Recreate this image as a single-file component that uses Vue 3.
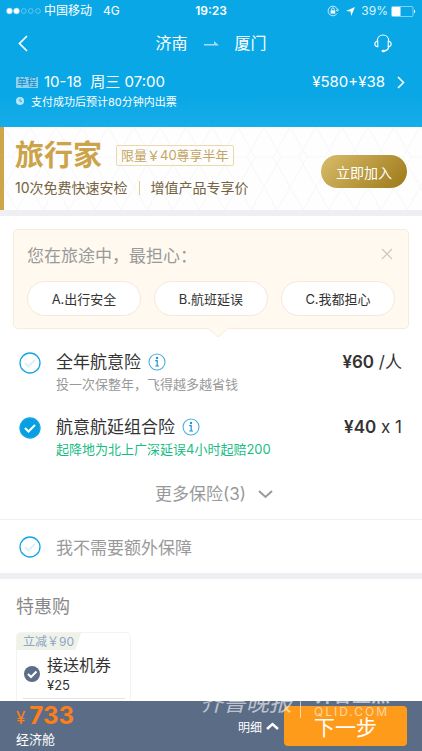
<script setup>
import { ref } from 'vue'

const worries = ['A.出行安全', 'B.航班延误', 'C.我都担心']
const plan = ref('combo')
const coupon = ref(true)
const plans = [
  { id: 'year', name: '全年航意险', note: '投一次保整年，飞得越多越省钱', price: '¥60', unit: '/人', good: false },
  { id: 'combo', name: '航意航延组合险', note: '起降地为北上广深延误4小时起赔200', price: '¥40', unit: 'x 1', good: true },
]
</script>

<template>
  <div class="page">
    <header class="header">
      <div class="status">
        <div class="carrier">
          <svg class="signal" width="36" height="8" viewBox="0 0 36 8">
            <circle cx="3.5" cy="4" r="2.9" fill="#fff" />
            <circle cx="10.5" cy="4" r="2.9" fill="#fff" />
            <circle cx="17.8" cy="4" r="2.4" />
            <circle cx="24.8" cy="4" r="2.4" />
            <circle cx="32" cy="4" r="2.4" />
          </svg>
          <span>中国移动</span>
          <span class="net">4G</span>
        </div>
        <strong class="clock">19:23</strong>
        <div class="power">
          <svg width="12" height="12" viewBox="0 0 12 12" fill="none" stroke="#d9f2fd">
            <path d="M10.6 5A4.8 4.8 0 1 0 10 8.5M9 5.2l1.7 1 1-1.8" stroke-width="0.9" />
            <path d="M3.6 5.4h4.6v3.2H3.6z" fill="#fff" stroke="none" />
            <path d="M4.6 5.5V4.2a1.3 1.3 0 0 1 2.6 0v1.3" stroke-width="0.9" />
          </svg>
          <svg class="locate" width="9" height="9" viewBox="0 0 9 9"><path d="M9 0 5.2 9 4.6 4.5 0 4z" fill="#fff" /></svg>
          <span>39%</span>
          <svg class="battery" width="25" height="11" viewBox="0 0 25 11">
            <rect x="0.5" y="0.5" width="21.5" height="10" rx="1" fill="none" stroke="#7fd2f6" />
            <rect x="1" y="1" width="8.5" height="9" fill="#fff" />
            <path d="M23 3.8c1.6 0 1.6 3.4 0 3.4z" fill="#fff" />
          </svg>
        </div>
      </div>

      <nav class="nav">
        <button class="icon-button" aria-label="返回">
          <svg width="10" height="17" viewBox="0 0 10 17"><path d="M9 1 1.5 8.5 9 16" fill="none" stroke="#fff" stroke-width="1.7" /></svg>
        </button>
        <h1 class="route">
          <span>济南</span>
          <svg width="15" height="5" viewBox="0 0 15 5"><path d="M0 3h10V0l5 4.6H0z" fill="#a5dcf6" /></svg>
          <span>厦门</span>
        </h1>
        <button class="icon-button service" aria-label="客服">
          <svg width="18" height="19" viewBox="0 0 18 19" fill="none" stroke="#fff" stroke-width="1.1">
            <path d="M3.2 7.5C3.2 3.6 5.6 1 9 1s5.8 2.6 5.8 6.5M3.8 7.200v5.600C1.800 12.600.8 11.500.8 10s1-2.600 3-2.800zM14.200 7.200v5.600c2-.2 3-1.300 3-2.800s-1-2.600-3-2.800zM14.800 12.800c-.4 2.300-1.800 3.600-4 4" />
            <ellipse cx="9.5" cy="17" rx="2" ry="1.2" fill="#fff" stroke="none" />
          </svg>
        </button>
      </nav>

      <section class="trip">
        <div class="trip-main">
          <span class="tag">单程</span>
          <span class="date">10-18&nbsp; 周三 07:00</span>
          <a class="fare" href="#fare">
            ¥580+¥38
            <svg width="8" height="13" viewBox="0 0 8 13"><path d="m1 1 5.500 5.500L1 12" fill="none" stroke="#fff" stroke-width="1.6" /></svg>
          </a>
        </div>
        <p class="trip-note">
          <svg width="8" height="8" viewBox="0 0 8 8"><circle cx="4" cy="4" r="4" fill="#b9e4f8" /><path d="M4 1.800v2.500h2" fill="none" stroke="#1aa8e4" /></svg>
          支付成功后预计80分钟内出票
        </p>
      </section>
    </header>

    <main class="content">
      <section class="member">
        <svg class="lattice" width="100%" height="100%" aria-hidden="true">
          <defs>
            <pattern id="hex" width="52" height="60" patternUnits="userSpaceOnUse">
              <path d="M0 0 17 30 0 60M52 0 35 30l17 30M17 30h18M26 0 9 30l17 30M26 0l17 30-17 30M0 30h9M43 30h9" fill="none" stroke="#f8f8f8" stroke-width="1.2" />
            </pattern>
          </defs>
          <rect width="100%" height="100%" fill="url(#hex)" />
        </svg>
        <div class="member-text">
          <div class="member-top">
            <strong class="brand">旅行家</strong>
            <span class="offer">限量￥40尊享半年</span>
          </div>
          <p class="perks"><span>10次免费快速安检</span><i></i><span>增值产品专享价</span></p>
        </div>
        <button class="join">立即加入</button>
      </section>

      <section class="insurance">
        <div class="survey">
          <div class="survey-head">
            <h2>您在旅途中，最担心：</h2>
            <button class="icon-button" aria-label="关闭">
              <svg width="12" height="12" viewBox="0 0 12 12"><path d="m1 1 10 10M11 1 1 11" stroke="#cac7c1" stroke-width="1.2" /></svg>
            </button>
          </div>
          <div class="choices">
            <button v-for="w in worries" :key="w">{{ w }}</button>
          </div>
          <svg class="pointer" width="20" height="10" viewBox="0 0 20 10"><path d="M0 0h20L10 9z" fill="#fff9f0" /><path d="m0 .5 10 8.500L20 .5" fill="none" stroke="#f7ecdb" /></svg>
        </div>

        <label v-for="p in plans" :key="p.id" class="plan">
          <input v-model="plan" type="radio" name="plan" :value="p.id" />
          <svg class="tick" width="22" height="22" viewBox="0 0 22 22">
            <circle cx="11" cy="11" r="10" /><path d="m6 11 3.500 3.500L16 8" />
          </svg>
          <span class="plan-body">
            <span class="plan-name">{{ p.name }}
              <svg width="18" height="18" viewBox="0 0 18 18">
                <circle cx="9" cy="9" r="8" fill="none" stroke="#49ade0" stroke-width="1.1" />
                <circle cx="9" cy="5" r="1.2" fill="#1c94d3" />
                <path d="M7.200 7.600h2v5.200M7.200 13h3.800" fill="none" stroke="#1c94d3" stroke-width="1.200" />
              </svg>
            </span>
            <span class="plan-note" :class="{ good: p.good }">{{ p.note }}</span>
          </span>
          <span class="plan-price"><b>{{ p.price }}</b> {{ p.unit }}</span>
        </label>

        <button class="more">
          更多保险(3)
          <svg width="15" height="9" viewBox="0 0 15 9"><path d="m1 1 6.500 6L14 1" fill="none" stroke="#999" stroke-width="2" /></svg>
        </button>

        <label class="plan none">
          <input v-model="plan" type="radio" name="plan" value="none" />
          <svg class="tick" width="22" height="22" viewBox="0 0 22 22">
            <circle cx="11" cy="11" r="10" /><path d="m6 11 3.500 3.500L16 8" />
          </svg>
          <span>我不需要额外保障</span>
        </label>
      </section>

      <section class="deals">
        <h2>特惠购</h2>
        <label class="coupon">
          <span class="discount">立减￥90</span>
          <span class="coupon-row">
            <input v-model="coupon" type="checkbox" />
            <svg class="coupon-tick" width="16" height="16" viewBox="0 0 16 16">
              <circle cx="8" cy="8" r="8" /><path d="m4 8 3 3 5.500-5.500" fill="none" stroke="#fff" stroke-width="2" />
            </svg>
            <span class="coupon-text"><span>接送机券</span><small>¥25</small></span>
          </span>
          <span class="rule"></span>
        </label>
      </section>
    </main>

    <footer class="footer">
      <div class="total">
        <div class="sum"><span>¥</span><b>733</b></div>
        <div class="cabin">经济舱</div>
      </div>
      <button class="detail">
        明细
        <svg width="13" height="8" viewBox="0 0 13 8"><path d="m1 7 5.500-5L12 7" fill="none" stroke="#fff" stroke-width="2.4" /></svg>
      </button>
      <button class="next">下一步</button>
      <div class="watermark">
        <em>齐鲁晚报</em>
        <div class="mark-site"><b>齐鲁壹点</b><span>QLID.COM</span></div>
      </div>
    </footer>
  </div>
</template>

<style>
body {
  margin: 0;
}
</style>

<style scoped>
* {
  box-sizing: border-box;
}
.page {
  display: flex;
  flex-direction: column;
  height: 100vh;
  overflow: hidden;
  background: #fff;
  color: #333;
  font-family: Inter, "Noto Sans CJK SC", sans-serif;
}
h1,
h2,
p {
  margin: 0;
  font-weight: 400;
}
button {
  border: 0;
  padding: 0;
  background: none;
  color: inherit;
  font: inherit;
}
svg {
  display: block;
  flex: none;
}
a {
  color: inherit;
  text-decoration: none;
}
input {
  position: absolute;
  opacity: 0;
  margin: 0;
}
.icon-button {
  display: flex;
}

.header {
  flex: none;
  height: 127px;
  background: linear-gradient(#0aa7e6 75%, #16ade8);
  color: #fff;
}
.status {
  display: grid;
  grid-template-columns: 1fr auto 1fr;
  align-items: center;
  height: 22px;
  padding: 0 6px;
  font-size: 12px;
  line-height: 16px;
}
.carrier,
.power {
  display: flex;
  align-items: center;
}
.signal {
  margin-right: 2px;
  stroke: #8fd8f7;
  stroke-width: 0.6;
  fill: none;
}
.net {
  margin-left: 11px;
}
.clock {
  font-weight: 600;
}
.power {
  justify-content: flex-end;
  color: #dff4fd;
}
.locate {
  margin: 0 6px 0 7px;
}
.battery {
  margin-left: 3px;
}
.nav {
  display: grid;
  grid-template-columns: 1fr auto 1fr;
  align-items: center;
  height: 42px;
  padding: 0 18px;
}
.service {
  justify-self: end;
  margin-right: 12px;
}
.route {
  display: flex;
  align-items: center;
  gap: 16px;
  font-size: 16px;
  line-height: 24px;
}
.trip {
  padding: 7px 17px 0 16px;
}
.trip-main {
  display: flex;
  align-items: center;
  height: 22px;
  font-size: 15px;
  line-height: 20px;
}
.tag {
  padding: 0 1px;
  margin-right: 6px;
  background: #8cd3f3;
  color: #0b86c2;
  font-size: 10px;
  line-height: 11px;
}
.fare {
  display: flex;
  align-items: center;
  gap: 12px;
  margin-left: auto;
}
.trip-note {
  display: flex;
  align-items: center;
  gap: 7px;
  height: 15px;
  font-size: 11px;
}

.content {
  flex: 1;
  min-height: 0;
  overflow: hidden;
}
.member {
  position: relative;
  display: flex;
  align-items: center;
  justify-content: space-between;
  height: 83px;
  padding: 0 15px 0 11px;
  border-left: 4px solid #cda64a;
  background: #fefefe;
}
.lattice {
  position: absolute;
  inset: 0;
}
.member-text,
.join {
  position: relative;
}
.member-top {
  display: flex;
  align-items: center;
  gap: 14px;
  height: 32px;
}
.brand {
  color: #cda34a;
  font-size: 29px;
  font-weight: 700;
  line-height: 32px;
}
.offer {
  padding: 0 4px;
  border: 1px solid #ecd9aa;
  border-radius: 2px;
  color: #c5a562;
  font-size: 13px;
  line-height: 19px;
}
.perks {
  display: flex;
  align-items: center;
  margin-top: 6px;
  color: #756342;
  font-size: 14px;
  line-height: 20px;
}
.perks i {
  width: 1px;
  height: 14px;
  margin: 0 11px;
  background: #e3c98c;
}
.join {
  width: 86px;
  height: 33px;
  margin-top: 6px;
  border-radius: 17px;
  background: linear-gradient(135deg, #d9bd6b, #9d7817);
  color: #fff;
  font-size: 14px;
}

.insurance {
  border-top: 6px solid #eeeef3;
  border-bottom: 6px solid #eeeef3;
  padding-top: 13px;
}
.survey {
  position: relative;
  margin: 0 13px 21px;
  height: 100px;
  padding: 11px 13px 0;
  border: 1px solid #f7ecdb;
  border-radius: 5px;
  background: #fff9f0;
}
.survey-head {
  display: flex;
  align-items: center;
  justify-content: space-between;
  height: 26px;
  padding-right: 2px;
  color: #999;
}
.survey-head h2 {
  font-size: 17px;
}
.choices {
  display: grid;
  grid-template-columns: repeat(3, 1fr);
  gap: 13px;
  margin-top: 14px;
}
.choices button {
  height: 35px;
  border: 1px solid #f5e8d8;
  border-radius: 18px;
  background: #fff;
  font-size: 13px;
}
.pointer {
  position: absolute;
  top: 98px;
  left: calc(50% - 3px);
}
.plan {
  display: flex;
  align-items: flex-start;
  padding: 0 20px 0 19px;
  height: 65px;
}
.tick {
  margin: 2px 15px 0 0;
  fill: none;
  stroke: #16a4e6;
  stroke-width: 1.3;
}
.tick path {
  stroke: #dfeff8;
  stroke-width: 2;
}
input:checked + .tick circle {
  fill: #069fe2;
}
input:checked + .tick path {
  stroke: #fff;
}
.plan-body {
  flex: 1;
}
.plan-name {
  display: flex;
  align-items: center;
  gap: 7px;
  font-size: 17px;
  line-height: 24px;
}
.plan-note {
  display: block;
  color: #999;
  font-size: 13px;
  line-height: 20px;
}
.plan-note.good {
  color: #18bd83;
}
.plan-price {
  font-size: 17px;
  line-height: 24px;
}
.plan-price b {
  font-weight: 600;
}
.more {
  display: flex;
  align-items: center;
  justify-content: center;
  gap: 12px;
  width: 100%;
  height: 40px;
  padding: 0 0 14px 6px;
  border-bottom: 1px solid #f2f2f2;
  color: #999;
  font-size: 17px;
}
.more svg {
  margin-top: 4px;
}
.plan.none {
  align-items: center;
  height: 53px;
  color: #999;
  font-size: 17px;
}
.plan.none .tick {
  margin-top: 0;
}

.deals {
  padding: 14px 16px 0;
}
.deals h2 {
  color: #888;
  font-size: 18px;
  line-height: 28px;
}
.coupon {
  display: block;
  width: 115px;
  height: 90px;
  margin-top: 11px;
  border: 1px solid #f3f3f0;
  border-radius: 5px;
}
.discount {
  display: block;
  width: 64px;
  padding-left: 6px;
  border-radius: 4px 0 4px 0;
  background: #eef2e8;
  clip-path: polygon(0 0, 100% 0, 91% 100%, 0 100%);
  color: #8ea5c5;
  font-size: 12px;
  line-height: 17px;
  white-space: nowrap;
}
.coupon-row {
  display: flex;
  align-items: center;
  gap: 7px;
  height: 48px;
  padding-left: 7px;
}
.coupon-tick {
  fill: #5b6d88;
}
.coupon-text {
  display: flex;
  flex-direction: column;
  font-size: 16px;
  line-height: 22px;
}
.coupon-text small {
  font-size: 13px;
  line-height: 18px;
}
.rule {
  display: block;
  height: 1px;
  margin: 0 5px;
  background: #e6e6e6;
}

.footer {
  position: relative;
  flex: none;
  display: flex;
  align-items: center;
  height: 50px;
  padding: 0 15px 0 16px;
  background: #5b6d86;
  color: #fff;
}
.total {
  flex: 1;
}
.sum {
  display: flex;
  align-items: baseline;
  gap: 4px;
  color: #ff7e18;
  font-size: 17px;
  line-height: 26px;
}
.sum b {
  font-size: 24px;
  font-weight: 700;
}
.cabin {
  padding-bottom: 3px;
  font-size: 13px;
  line-height: 16px;
}
.detail {
  display: flex;
  align-items: center;
  gap: 4px;
  margin-right: 5px;
  font-size: 12px;
}
.next {
  width: 123px;
  height: 40px;
  border-radius: 4px;
  background: #ff9b1a;
  font-size: 21px;
}
.watermark {
  position: absolute;
  right: 32px;
  bottom: 33px;
  display: flex;
  align-items: flex-end;
  color: rgba(255, 255, 255, 0.6);
  pointer-events: none;
}
.watermark em {
  padding-right: 8px;
  border-right: 1px solid rgba(255, 255, 255, 0.6);
  font-size: 23px;
  line-height: 30px;
}
.mark-site {
  display: flex;
  flex-direction: column;
  margin-left: 13px;
}
.mark-site b {
  font-size: 19px;
  line-height: 19px;
}
.mark-site span {
  font-size: 12px;
  line-height: 13px;
  letter-spacing: 2px;
}
</style>
